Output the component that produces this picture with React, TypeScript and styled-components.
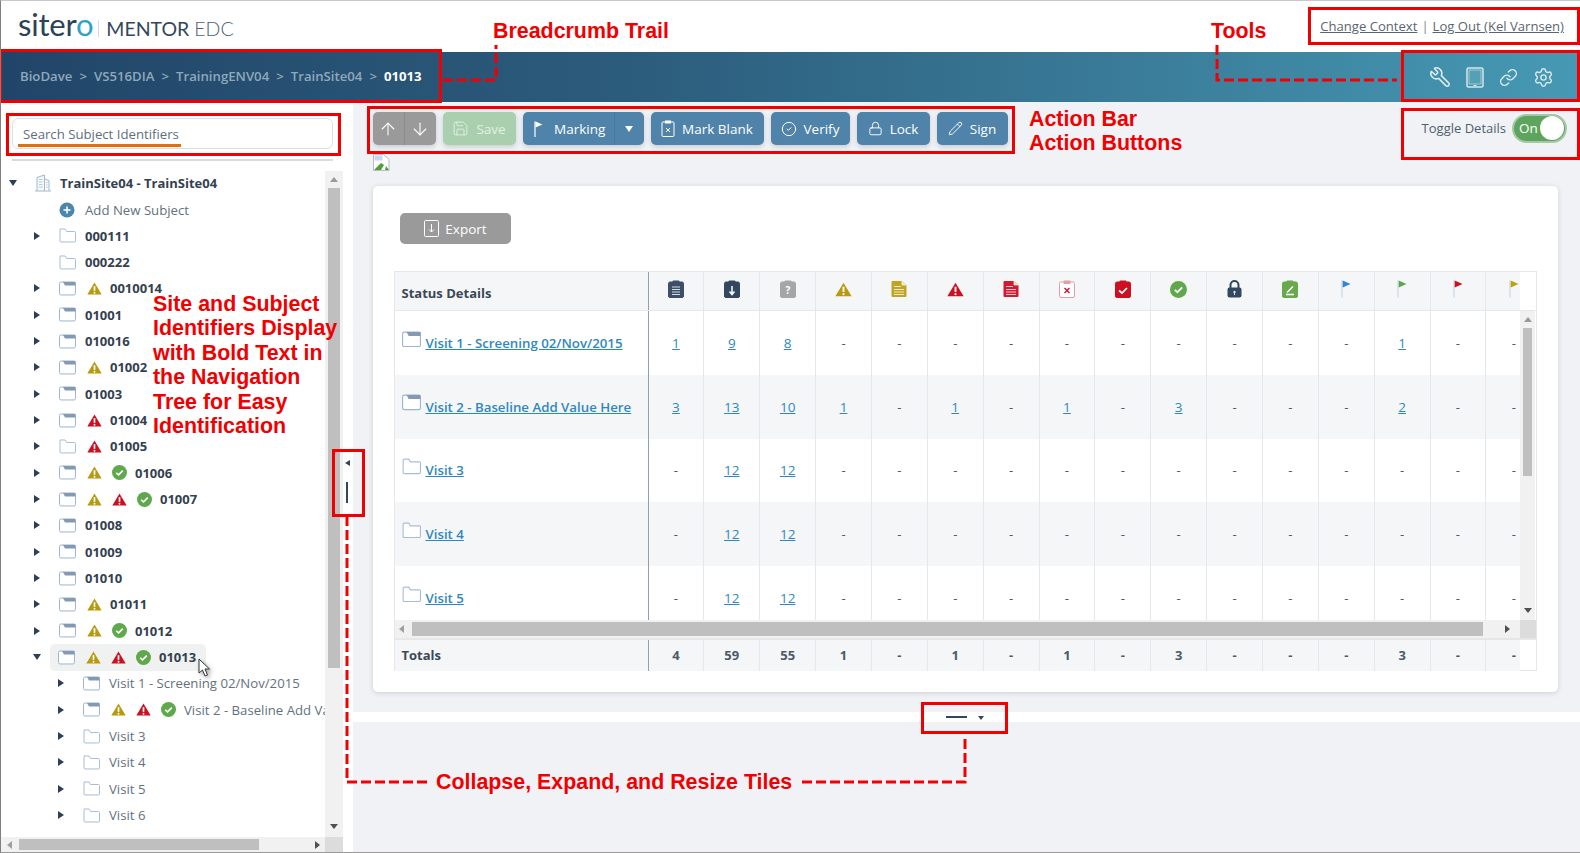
import React from "react";
import styled, { createGlobalStyle } from "styled-components";
import { ArrowDown, ArrowUp, CircleCheck, Link, Lock, Pencil, Save, Settings, Wrench } from "lucide-react";

const GlobalStyle = createGlobalStyle`
  html, body { margin: 0; padding: 0; background: #fff; }
  body { font-family: "Open Sans", "Liberation Sans", sans-serif; }
  * { box-sizing: border-box; }
`;

const Page = styled.div`
  position: relative;
  width: 1580px;
  height: 853px;
  overflow: hidden;
  display: flex;
  flex-direction: column;
  background: #fff;
  border-left: 1px solid #808080;
  border-top: 1px solid #c8c8c8;
  border-bottom: 1px solid #9a9a9a;
`;

const Header = styled.header`
  height: 51px;
  display: flex;
  align-items: center;
  justify-content: space-between;
  padding: 0 16px 0 17px;
`;

const Logo = styled.div`
  display: flex;
  align-items: baseline;
  color: #33475b;
  margin-top: -5px;
`;

const LogoMark = styled.span`
  font-family: "Lato", sans-serif;
  font-size: 31px;
  font-weight: 400;
  letter-spacing: -0.2px;
  color: #2c4256;
  b { font-weight: 400; color: #2ca3c6; }
`;

const LogoName = styled.span`
  font-family: "Lato", sans-serif;
  font-size: 19.5px;
  font-weight: 400;
  margin-left: 5px;
  padding-left: 7px;
  border-left: 1px solid #d5dadf;
  line-height: 17px;
  i { font-style: normal; font-weight: 300; margin-left: 5px; color: #51606e; }
`;

const TopLinks = styled.nav`
  display: flex;
  gap: 4px;
  font-size: 13.1px;
  color: #7c8792;
  margin-top: -1px;
  a { color: #5a6570; text-decoration: underline; }
`;

const Banner = styled.div`
  height: 50px;
  flex: none;
  display: flex;
  align-items: center;
  justify-content: space-between;
  padding: 0 26px 0 19px;
  background: linear-gradient(90deg, #214568 0%, #2c5c7c 40%, #4699b4 100%);
`;

const Crumbs = styled.div`
  display: flex;
  gap: 7px;
  font-size: 13.2px;
  font-weight: 600;
  color: #90a8bb;
  margin-top: -2px;
  b { color: #fff; font-weight: 700; }
`;

const ToolIcons = styled.div`
  display: flex;
  align-items: center;
  gap: 15px;
  color: #dbeaef;
`;

const Body = styled.div`
  flex: 1;
  display: flex;
  min-height: 0;
`;

const Sidebar = styled.aside`
  width: 352px;
  flex: none;
  display: flex;
  flex-direction: column;
  background: #fff;
`;

const SearchBox = styled.div`
  margin: 16px 0 0 11px;
  width: 321px;
  height: 31px;
  position: relative;
  flex: none;
  border: 1px solid #dcdfe3;
  border-radius: 6px;
  padding-left: 10px;
  display: flex;
  align-items: center;
  font-size: 13.2px;
  color: #5f6e7c;
  &::after {
    content: "";
    position: absolute;
    left: 5px;
    top: 25px;
    width: 163px;
    height: 3px;
    background: #e36f0c;
  }
`;

const Divider = styled.div`
  margin: 10px 0 0 11px;
  width: 321px;
  height: 2px;
  flex: none;
  background: #dadada;
`;

const TreeArea = styled.div`
  flex: 1;
  min-height: 0;
  display: flex;
  margin-top: 10px;
  width: 342px;
`;

const TreeList = styled.div`
  width: 324px;
  flex: none;
  overflow: hidden;
  margin-top: -1px;
`;

const TreeRow = styled.div<{ $level: number }>`
  height: 26.33px;
  display: flex;
  align-items: center;
  padding-left: ${(p) => 6 + p.$level * 24}px;
  white-space: nowrap;
`;

const Twist = styled.span<{ $state: "open" | "closed" | "none" }>`
  width: 20px;
  flex: none;
  display: block;
  height: 0;
  ${(p) =>
    p.$state === "closed" &&
    `border-left: 6px solid #2e4057; border-top: 4.5px solid transparent; border-bottom: 4.5px solid transparent; margin-left: 3px; margin-right: 11px; width: 0;`}
  ${(p) =>
    p.$state === "open" &&
    `border-top: 6px solid #2e4057; border-left: 4.5px solid transparent; border-right: 4.5px solid transparent; margin-left: 2px; margin-right: 9px; width: 0;`}
`;

const RowBody = styled.div<{ $active?: boolean }>`
  display: flex;
  align-items: center;
  height: 27px;
  padding: 0 10px 0 8px;
  border-radius: 5px;
  background: ${(p) => (p.$active ? "#f0f1f1" : "transparent")};
`;

const IconSlot = styled.span`
  width: 26px;
  flex: none;
  display: flex;
  align-items: center;
`;

const StatusSlot = styled.span`
  width: 25px;
  flex: none;
  display: flex;
  align-items: center;
  padding-left: 2px;
`;

const Label = styled.span<{ $strong?: boolean }>`
  font-size: ${(p) => (p.$strong ? 13 : 13.2)}px;
  font-weight: ${(p) => (p.$strong ? 700 : 400)};
  color: ${(p) => (p.$strong ? "#33414f" : "#63717e")};
`;

const VTrack = styled.div<{ $width: number }>`
  width: ${(p) => p.$width}px;
  flex: none;
  position: relative;
  background: #f1f1f1;
`;

const VThumb = styled.div<{ $top: number; $height: number }>`
  position: absolute;
  left: 3px;
  right: 3px;
  top: ${(p) => p.$top}px;
  height: ${(p) => p.$height}px;
  background: #bfbfbf;
`;

const ArrowUpMark = styled.span<{ $top: number }>`
  position: absolute;
  left: 50%;
  margin-left: -4px;
  top: ${(p) => p.$top}px;
  border-bottom: 5px solid #9a9a9a;
  border-left: 4px solid transparent;
  border-right: 4px solid transparent;
`;

const ArrowDownMark = styled.span<{ $bottom: number }>`
  position: absolute;
  left: 50%;
  margin-left: -4px;
  bottom: ${(p) => p.$bottom}px;
  border-top: 5px solid #505050;
  border-left: 4px solid transparent;
  border-right: 4px solid transparent;
`;

const HTrack = styled.div<{ $height: number; $width?: number }>`
  height: ${(p) => p.$height}px;
  ${(p) => (p.$width ? `width: ${p.$width}px;` : "")}
  flex: none;
  display: flex;
  align-items: stretch;
`;

const HRail = styled.div`
  flex: 1;
  position: relative;
  background: #f1f1f1;
`;

const HThumb = styled.div<{ $left: number; $width: number }>`
  position: absolute;
  top: 2px;
  bottom: 2px;
  left: ${(p) => p.$left}px;
  width: ${(p) => p.$width}px;
  background: #bfbfbf;
`;

const LeftMark = styled.span<{ $left: number }>`
  position: absolute;
  top: 50%;
  margin-top: -4px;
  left: ${(p) => p.$left}px;
  border-right: 5px solid #a0a0a0;
  border-top: 4px solid transparent;
  border-bottom: 4px solid transparent;
`;

const RightMark = styled.span<{ $right: number }>`
  position: absolute;
  top: 50%;
  margin-top: -4px;
  right: ${(p) => p.$right}px;
  border-left: 5px solid #505050;
  border-top: 4px solid transparent;
  border-bottom: 4px solid transparent;
`;

const ScrollCorner = styled.div<{ $width: number }>`
  width: ${(p) => p.$width}px;
  flex: none;
  background: #dcdcdc;
`;

/* resize handle sits in the strip between tree and main */
const Splitter = styled.div`
  position: absolute;
  left: 343px;
  top: 458px;
  width: 10px;
  height: 50px;
`;

const SplitArrow = styled.span`
  position: absolute;
  left: 1px;
  top: 1px;
  border-right: 5px solid #33475b;
  border-top: 3.5px solid transparent;
  border-bottom: 3.5px solid transparent;
`;

const SplitBar = styled.span`
  position: absolute;
  left: 2px;
  top: 23px;
  width: 2px;
  height: 21px;
  background: #33475b;
`;

const Main = styled.main`
  flex: 1;
  min-width: 0;
  display: flex;
  flex-direction: column;
  background: #f0f2f6;
`;

const ToolbarRow = styled.div`
  display: flex;
  align-items: center;
  justify-content: space-between;
  padding: 10px 13px 0 19.5px;
  height: 43px;
  flex: none;
`;

const Actions = styled.div`
  display: flex;
  gap: 7px;
`;

const ActionButton = styled.button<{ $width: number; $tone?: "blue" | "green" | "gray" }>`
  width: ${(p) => p.$width}px;
  height: 33px;
  padding: 0;
  border: 0;
  border-radius: 5px;
  display: flex;
  align-items: center;
  justify-content: center;
  gap: 7px;
  font-family: "Open Sans", sans-serif;
  font-size: 13.5px;
  color: ${(p) => (p.$tone === "green" ? "#e4f0e5" : "#fff")};
  background: ${(p) => (p.$tone === "green" ? "#a9cfae" : p.$tone === "gray" ? "#9a9a9a" : "#4f83aa")};
  box-shadow: 0 2px 5px rgba(60, 70, 90, 0.22);
`;

const SplitGroup = styled.div<{ $tone: "blue" | "gray" }>`
  display: flex;
  height: 33px;
  border-radius: 5px;
  overflow: hidden;
  color: #fff;
  font-size: 13.5px;
  background: ${(p) => (p.$tone === "gray" ? "#9a9a9a" : "#4f83aa")};
  box-shadow: 0 2px 5px rgba(60, 70, 90, 0.22);
`;

const SplitPart = styled.div<{ $width: number; $dark?: boolean; $gap?: number; $shift?: number }>`
  width: ${(p) => p.$width}px;
  display: flex;
  align-items: center;
  justify-content: center;
  gap: ${(p) => p.$gap ?? 10}px;
  padding-left: ${(p) => p.$shift ?? 0}px;
  border-left: ${(p) => (p.$dark ? "1px solid rgba(40, 60, 90, 0.14)" : "0")};
`;

const Caret = styled.span`
  border-top: 6px solid #fff;
  border-left: 4.5px solid transparent;
  border-right: 4.5px solid transparent;
`;

const ToggleWrap = styled.div`
  display: flex;
  align-items: center;
  gap: 6px;
  font-size: 13px;
  color: #4f5f6e;
  margin-top: -1px;
`;

const ToggleSwitch = styled.div`
  width: 55px;
  height: 29px;
  border-radius: 15px;
  background: #5da55e;
  border: 2px solid #a5c9a6;
  display: flex;
  align-items: center;
  justify-content: space-between;
  padding: 0 1px 0 5px;
  color: #fff;
  font-size: 13.5px;
  &::after {
    content: "";
    width: 24px;
    height: 24px;
    border-radius: 50%;
    background: #fff;
  }
`;

const BrokenSlot = styled.div`
  height: 41px;
  flex: none;
  padding: 9px 0 0 20px;
`;

const Card = styled.section`
  margin: 0 22px 0 19.5px;
  height: 506px;
  flex: none;
  background: #fff;
  border-radius: 5px;
  box-shadow: 0 1px 5px rgba(70, 80, 100, 0.22);
  padding: 27px 21px 0;
`;

const ExportButton = styled(ActionButton)`
  margin-left: 6.5px;
  height: 31px;
  gap: 6px;
  box-shadow: none;
`;

const Table = styled.div`
  margin-top: 27px;
  border: 1.5px solid #e5e7ea;
  width: 1143px;
  height: 400px;
  display: flex;
  flex-direction: column;
`;

const ClipRow = styled.div<{ $height: number; $tinted?: boolean }>`
  width: 1125.7px;
  height: ${(p) => p.$height}px;
  flex: none;
  display: flex;
  overflow: hidden;
  background: ${(p) => (p.$tinted ? "#f5f6f8" : "#fff")};
`;

const NameCell = styled.div<{ $strong?: boolean; $drop?: number }>`
  width: 254px;
  flex: none;
  display: flex;
  align-items: center;
  gap: 5px;
  padding: ${(p) => p.$drop ?? 0}px 0 0 7px;
  font-size: 13px;
  font-weight: ${(p) => (p.$strong ? 700 : 400)};
  color: #3a4857;
  border-right: 1.5px solid #8ea1b3;
`;

const Cell = styled.div<{ $strong?: boolean; $lift?: number }>`
  width: 55.87px;
  flex: none;
  display: flex;
  align-items: center;
  justify-content: center;
  padding-bottom: ${(p) => p.$lift ?? 0}px;
  font-size: 13px;
  font-weight: ${(p) => (p.$strong ? 700 : 400)};
  color: #4b5a69;
  border-right: 1.5px solid #e5e7ea;
`;

const DataLink = styled.a`
  color: #2e88c0;
  text-decoration: underline;
  font-size: 13.5px;
`;

const NameLink = styled(DataLink)`
  font-size: 13.25px;
  font-weight: 600;
  white-space: nowrap;
`;

const FolderWrap = styled.span`
  display: flex;
  margin-bottom: 8px;
`;

const HeadSep = styled.div`
  height: 1.5px;
  flex: none;
  background: #e5e7ea;
`;

const TableBody = styled.div`
  height: 309px;
  flex: none;
  display: flex;
`;

const RowsViewport = styled.div`
  width: 1125.7px;
  flex: none;
  overflow: hidden;
`;

const TotalsSep = styled.div`
  height: 1.5px;
  flex: none;
  background: #e5e7ea;
`;

const ResizeBand = styled.div`
  margin-top: 20px;
  height: 10px;
  flex: none;
  background: #fff;
  display: flex;
  align-items: center;
  justify-content: center;
  gap: 11px;
  padding-right: 4px;
`;

const Dash = styled.span`
  width: 21px;
  height: 2px;
  background: #33475b;
`;

const SmallCaret = styled.span`
  margin-top: 2px;
  border-top: 4px solid #33475b;
  border-left: 3px solid transparent;
  border-right: 3px solid transparent;
`;

/* red review markup on top of the screen */
const RedBox = styled.div<{ $x: number; $y: number; $w: number; $h: number }>`
  position: absolute;
  left: ${(p) => p.$x}px;
  top: ${(p) => p.$y}px;
  width: ${(p) => p.$w}px;
  height: ${(p) => p.$h}px;
  border: 3px solid #f00000;
`;

const Callout = styled.div<{ $x: number; $y: number }>`
  position: absolute;
  left: ${(p) => p.$x}px;
  top: ${(p) => p.$y}px;
  font-family: "Liberation Sans", Arial, sans-serif;
  font-size: 21.4px;
  line-height: 24.4px;
  font-weight: 700;
  color: #f00000;
  white-space: nowrap;
`;

const Leaders = styled.svg`
  position: absolute;
  left: -1px;
  top: -1px;
  pointer-events: none;
`;

const CursorMark = styled.svg`
  position: absolute;
  left: 196px;
  top: 657px;
  filter: drop-shadow(2px 2px 2px rgba(0, 0, 0, 0.35));
`;

const FolderIcon = ({ kind, size = 17 }: { kind: "empty" | "tab"; size?: number }) =>
  kind === "empty" ? (
    <svg width={size} height={size * 0.88} viewBox="0 0 17 15">
      <path d="M1.500 1h4.500l1.500 2.500h8a1 1 0 0 1 1 1V13a1 1 0 0 1-1 1h-13.500a1 1 0 0 1-1-1V2a1 1 0 0 1 1-1z" fill="#fff" stroke="#a9bdd6" />
    </svg>
  ) : (
    <svg width={size} height={size * 0.88} viewBox="0 0 17 15">
      <rect x="0.500" y="1" width="16" height="13" rx="1.500" fill="#fff" stroke="#9fb4ce" />
      <path d="M4 1h12.500v3.500H6z" fill="#8399b4" />
    </svg>
  );

const Building = () => (
  <svg width="18" height="18" viewBox="0 0 18 18">
    <path d="M1 17h16M3 17V3.500L10.500 1v16M10.500 5l4.500 1.500V17" fill="#f4f7fb" stroke="#a3b8d0" />
    <path d="M5 5.500h3.500M5 8h3.500M5 10.500h3.500M5 13h3.500M12 8.500h1.500M12 11h1.500M12 13.500h1.500" stroke="#b9c9db" />
  </svg>
);

const AddCircle = () => (
  <svg width="16" height="16" viewBox="0 0 16 16">
    <circle cx="8" cy="8" r="7.500" fill="#4b86ad" />
    <path d="M8 4.500v7M4.500 8h7" stroke="#fff" strokeWidth="1.600" />
  </svg>
);

const Warn = ({ color, size = 15 }: { color: string; size?: number }) => (
  <svg width={size} height={size * 0.87} viewBox="0 0 16 14">
    <path d="M8 .6 15.700 13.500H.3z" fill={color} />
    <path d="M8 4.500v5" stroke="#fff" strokeWidth="1.800" />
    <circle cx="8" cy="11.500" r="1" fill="#fff" />
  </svg>
);

const Done = ({ size = 15 }: { size?: number }) => (
  <svg width={size} height={size} viewBox="0 0 16 16">
    <circle cx="8" cy="8" r="8" fill="#5fa84c" />
    <path d="M4.500 8.300 7 10.500l4.500-4.500" fill="none" stroke="#fff" strokeWidth="1.700" />
  </svg>
);

const Clipboard = ({ fill, line, children }: { fill: string; line?: string; children?: React.ReactNode }) => (
  <svg width="16" height="18" viewBox="0 0 16 18">
    <rect x="0.500" y="2" width="15" height="15.500" rx="1.500" fill={fill} stroke={line || fill} />
    <rect x="4.500" y="0.500" width="7" height="3.500" rx="1" fill={line || fill} />
    {children}
  </svg>
);

const DocIcon = ({ fill }: { fill: string }) => (
  <svg width="16" height="18" viewBox="0 0 16 18">
    <path d="M1.500 1h9.500l4.500 4v11a1 1 0 0 1-1 1h-13a1 1 0 0 1-1-1V2a1 1 0 0 1 1-1z" fill={fill} />
    <path d="M11 1v4h4.500" fill="#f7e9a6" stroke="#fff" strokeWidth="0.700" />
    <path d="M3 6.500h7M3 9.500h10M3 12h10M3 14.500h10" stroke="#fff" strokeOpacity="0.75" />
  </svg>
);

const FlagIcon = ({ color }: { color: string }) => (
  <svg width="10" height="18" viewBox="0 0 10 18">
    <path d="M1 .5v17" stroke="#c9dbe6" strokeWidth="1.300" />
    <path d="M1.700.5 9.500 4l-7.800 3.500z" fill={color} />
  </svg>
);

const LockGlyph = () => (
  <svg width="15" height="18" viewBox="0 0 15 18">
    <path d="M3.500 8V5a4 4 0 0 1 8 0v3" fill="none" stroke="#33475f" strokeWidth="2" />
    <rect x="0.500" y="7.500" width="14" height="10" rx="2" fill="#33475f" />
    <circle cx="7.500" cy="12" r="1.200" fill="#d8dfe6" />
    <path d="M7.500 12v3" stroke="#d8dfe6" />
  </svg>
);

const HEAD_ICONS: React.ReactNode[] = [
  <Clipboard key="a" fill="#3c4e68"><path d="M4 7h8M4 9.500h8M4 12h8M4 14.500h8" stroke="#d6dbe2" strokeWidth="1.200" /></Clipboard>,
  <Clipboard key="b" fill="#33475f"><path d="M8 6v8M5.500 11.500 8 14.500l2.500-3" fill="none" stroke="#fff" strokeWidth="1.500" /></Clipboard>,
  <Clipboard key="c" fill="#a6a6a6"><text x="8" y="14" textAnchor="middle" fontSize="10" fontWeight="700" fill="#fff" fontFamily="Open Sans">?</text></Clipboard>,
  <Warn key="d" color="#b89a10" size={17} />,
  <DocIcon key="e" fill="#c0a424" />,
  <Warn key="f" color="#cc1022" size={17} />,
  <DocIcon key="g" fill="#d01a33" />,
  <Clipboard key="h" fill="#fff" line="#e0a0a6"><path d="M5.500 8l5 5M10.500 8l-5 5" stroke="#cc1022" strokeWidth="1.300" /></Clipboard>,
  <Clipboard key="i" fill="#cc1022"><path d="M4 10.500 7 13l5-5" fill="none" stroke="#fff" strokeWidth="1.700" /></Clipboard>,
  <Done key="j" size={17} />,
  <LockGlyph key="k" />,
  <Clipboard key="l" fill="#69a84f"><path d="M4 14.500h8M5 12.500 11 6.500" stroke="#fff" strokeWidth="1.500" /></Clipboard>,
  <FlagIcon key="m" color="#2f87d9" />,
  <FlagIcon key="n" color="#5da84e" />,
  <FlagIcon key="o" color="#cc1022" />,
  <FlagIcon key="p" color="#bfa010" />,
];

type Status = "warn" | "alert" | "ok";

type TreeItem = {
  level: number;
  twist: "open" | "closed" | "none";
  folder: "empty" | "tab";
  status: Status[];
  label: string;
  strong?: boolean;
  active?: boolean;
};

const subject = (label: string, folder: "empty" | "tab", status: Status[] = [], twist: "closed" | "none" | "open" = "closed", active = false): TreeItem => ({
  level: 1,
  twist,
  folder,
  status,
  label,
  strong: true,
  active,
});

const visit = (label: string, folder: "empty" | "tab", status: Status[] = []): TreeItem => ({
  level: 2,
  twist: "closed",
  folder,
  status,
  label,
});

const TREE: TreeItem[] = [
  subject("000111", "empty"),
  subject("000222", "empty", [], "none"),
  subject("0010014", "tab", ["warn"]),
  subject("01001", "tab"),
  subject("010016", "tab"),
  subject("01002", "tab", ["warn"]),
  subject("01003", "tab"),
  subject("01004", "tab", ["alert"]),
  subject("01005", "empty", ["alert"]),
  subject("01006", "tab", ["warn", "ok"]),
  subject("01007", "tab", ["warn", "alert", "ok"]),
  subject("01008", "tab"),
  subject("01009", "tab"),
  subject("01010", "tab"),
  subject("01011", "tab", ["warn"]),
  subject("01012", "tab", ["warn", "ok"]),
  subject("01013", "tab", ["warn", "alert", "ok"], "open", true),
  visit("Visit 1 - Screening 02/Nov/2015", "tab"),
  visit("Visit 2 - Baseline Add Value Here", "tab", ["warn", "alert", "ok"]),
  visit("Visit 3", "empty"),
  visit("Visit 4", "empty"),
  visit("Visit 5", "empty"),
  visit("Visit 6", "empty"),
];

const dashes = (over: Record<number, string>) => Array.from({ length: 16 }, (_, i) => over[i] || "-");

const VISITS = [
  { name: "Visit 1 - Screening 02/Nov/2015", folder: "tab" as const, values: dashes({ 0: "1", 1: "9", 2: "8", 13: "1" }) },
  { name: "Visit 2 - Baseline Add Value Here", folder: "tab" as const, values: dashes({ 0: "3", 1: "13", 2: "10", 3: "1", 5: "1", 7: "1", 9: "3", 13: "2" }) },
  { name: "Visit 3", folder: "empty" as const, values: dashes({ 1: "12", 2: "12" }) },
  { name: "Visit 4", folder: "empty" as const, values: dashes({ 1: "12", 2: "12" }) },
  { name: "Visit 5", folder: "empty" as const, values: dashes({ 1: "12", 2: "12" }) },
];

const TOTALS = dashes({ 0: "4", 1: "59", 2: "55", 3: "1", 5: "1", 7: "1", 9: "3", 13: "3" });

const StatusIcon = ({ kind }: { kind: Status }) =>
  kind === "ok" ? <Done /> : <Warn color={kind === "warn" ? "#b89a10" : "#cc1022"} />;

const TabletGlyph = () => (
  <svg width="18" height="21" viewBox="0 0 18 21">
    <rect x="1" y="1" width="16" height="19" rx="1.500" fill="none" stroke="#d5e8ea" strokeWidth="1.500" />
    <rect x="3" y="3" width="12" height="14" fill="#56a0b6" stroke="#b6dcd8" strokeWidth="0.800" />
    <path d="M7.500 18.500h3" stroke="#dbeaef" />
  </svg>
);

const FlagGlyph = () => (
  <svg width="9" height="16" viewBox="0 0 9 16">
    <path d="M1 .5V16" stroke="#fff" strokeWidth="1.200" />
    <path d="M1.500.5 8.500 3.500l-7 3z" fill="#fff" />
  </svg>
);

const ClipXGlyph = () => (
  <svg width="14" height="17" viewBox="0 0 14 17">
    <rect x="1" y="2" width="12" height="14.500" rx="1" fill="none" stroke="#fff" />
    <rect x="4" y="0.500" width="6" height="3" fill="#fff" />
    <path d="M5 8l4 4M9 8l-4 4" stroke="#fff" />
  </svg>
);

const ExportGlyph = () => (
  <svg width="15" height="17" viewBox="0 0 15 17">
    <rect x="0.500" y="0.500" width="14" height="16" rx="1" fill="none" stroke="#fff" />
    <path d="M7.500 4v8M5 9.500 7.500 12 10 9.500" fill="none" stroke="#fff" />
  </svg>
);

const BrokenImage = () => (
  <svg width="17" height="17" viewBox="0 0 17 17">
    <path d="M.5.500h10l5.500 5v11H.5z" fill="#fff" stroke="#b8bcc2" />
    <path d="M1.500 1.500h8v5h-8z" fill="#c4d8f0" />
    <path d="M1 16 8 9l3 2-3 5z" fill="#4e9e3a" />
    <path d="M13 12l3 4h-4z" fill="#4e9e3a" />
  </svg>
);

export default function App() {
  return (
    <Page>
      <GlobalStyle />
      <Header>
        <Logo>
          <LogoMark>
            siter<b>o</b>
          </LogoMark>
          <LogoName>
            MENTOR<i>EDC</i>
          </LogoName>
        </Logo>
        <TopLinks>
          <a>Change Context</a>|<a>Log Out (Kel Varnsen)</a>
        </TopLinks>
      </Header>
      <Banner>
        <Crumbs>
          <span>BioDave</span>
          <span>&gt;</span>
          <span>VS516DIA</span>
          <span>&gt;</span>
          <span>TrainingENV04</span>
          <span>&gt;</span>
          <span>TrainSite04</span>
          <span>&gt;</span>
          <b>01013</b>
        </Crumbs>
        <ToolIcons>
          <Wrench size={22} strokeWidth={1.7} style={{ transform: "scaleX(-1)" }} />
          <TabletGlyph />
          <Link size={19} strokeWidth={1.8} />
          <Settings size={21} strokeWidth={1.6} />
        </ToolIcons>
      </Banner>
      <Body>
        <Sidebar>
          <SearchBox>Search Subject Identifiers</SearchBox>
          <Divider />
          <TreeArea>
            <TreeList>
              <TreeRow $level={0}>
                <Twist $state="open" />
                <RowBody>
                  <IconSlot>
                    <Building />
                  </IconSlot>
                  <Label $strong>TrainSite04 - TrainSite04</Label>
                </RowBody>
              </TreeRow>
              <TreeRow $level={1}>
                <Twist $state="none" />
                <RowBody>
                  <IconSlot>
                    <AddCircle />
                  </IconSlot>
                  <Label>Add New Subject</Label>
                </RowBody>
              </TreeRow>
              {TREE.map((item) => (
                <TreeRow key={item.label} $level={item.level}>
                  <Twist $state={item.twist} />
                  <RowBody $active={item.active}>
                    <IconSlot>
                      <FolderIcon kind={item.folder} />
                    </IconSlot>
                    {item.status.map((s) => (
                      <StatusSlot key={s}>
                        <StatusIcon kind={s} />
                      </StatusSlot>
                    ))}
                    <Label $strong={item.strong}>{item.label}</Label>
                  </RowBody>
                </TreeRow>
              ))}
            </TreeList>
            <VTrack $width={18}>
              <ArrowUpMark $top={6} />
              <VThumb $top={17} $height={480} />
              <ArrowDownMark $bottom={8} />
            </VTrack>
          </TreeArea>
          <HTrack $height={15} $width={342}>
            <HRail>
              <LeftMark $left={6} />
              <HThumb $left={18} $width={240} />
              <RightMark $right={5} />
            </HRail>
            <ScrollCorner $width={18} />
          </HTrack>
          <Splitter>
            <SplitArrow />
            <SplitBar />
          </Splitter>
        </Sidebar>
        <Main>
          <ToolbarRow>
            <Actions>
              <SplitGroup $tone="gray">
                <SplitPart $width={31}>
                  <ArrowUp size={20} strokeWidth={1.3} />
                </SplitPart>
                <SplitPart $width={32} $dark>
                  <ArrowDown size={20} strokeWidth={1.3} />
                </SplitPart>
              </SplitGroup>
              <ActionButton $width={73} $tone="green">
                <Save size={17} strokeWidth={1.3} />
                Save
              </ActionButton>
              <SplitGroup $tone="blue">
                <SplitPart $width={91.500} $gap={11} $shift={3}>
                  <FlagGlyph />
                  Marking
                </SplitPart>
                <SplitPart $width={29.500} $dark>
                  <Caret />
                </SplitPart>
              </SplitGroup>
              <ActionButton $width={113}>
                <ClipXGlyph />
                Mark Blank
              </ActionButton>
              <ActionButton $width={79}>
                <CircleCheck size={16} strokeWidth={1.5} />
                Verify
              </ActionButton>
              <ActionButton $width={73}>
                <Lock size={15} strokeWidth={1.5} />
                Lock
              </ActionButton>
              <ActionButton $width={71}>
                <Pencil size={15} strokeWidth={1.5} />
                Sign
              </ActionButton>
            </Actions>
            <ToggleWrap>
              Toggle Details
              <ToggleSwitch>On</ToggleSwitch>
            </ToggleWrap>
          </ToolbarRow>
          <BrokenSlot>
            <BrokenImage />
          </BrokenSlot>
          <Card>
            <ExportButton as="div" $width={111} $tone="gray">
              <ExportGlyph />
              Export
            </ExportButton>
            <Table>
              <ClipRow $height={37.500} $tinted>
                <NameCell $strong $drop={4}>Status Details</NameCell>
                {HEAD_ICONS.map((icon, i) => (
                  <Cell key={i} $lift={3}>{icon}</Cell>
                ))}
              </ClipRow>
              <HeadSep />
              <TableBody>
                <RowsViewport>
                  {VISITS.map((row, r) => (
                    <ClipRow key={row.name} $height={63.750} $tinted={r % 2 === 1}>
                      <NameCell>
                        <FolderWrap>
                          <FolderIcon kind={row.folder} size={19} />
                        </FolderWrap>
                        <NameLink>{row.name}</NameLink>
                      </NameCell>
                      {row.values.map((v, i) => (
                        <Cell key={i}>{v === "-" ? "-" : <DataLink>{v}</DataLink>}</Cell>
                      ))}
                    </ClipRow>
                  ))}
                </RowsViewport>
                <VTrack $width={15}>
                  <ArrowUpMark $top={6} />
                  <VThumb $top={17} $height={148} />
                  <ArrowDownMark $bottom={7} />
                </VTrack>
              </TableBody>
              <HTrack $height={18}>
                <HRail>
                  <LeftMark $left={4} />
                  <HThumb $left={17} $width={1071} />
                  <RightMark $right={10} />
                </HRail>
                <ScrollCorner $width={16} />
              </HTrack>
              <TotalsSep />
              <ClipRow $height={31} $tinted>
                <NameCell $strong>Totals</NameCell>
                {TOTALS.map((v, i) => (
                  <Cell key={i} $strong>
                    {v}
                  </Cell>
                ))}
              </ClipRow>
            </Table>
          </Card>
          <ResizeBand>
            <Dash />
            <SmallCaret />
          </ResizeBand>
        </Main>
      </Body>

      <CursorMark width="16" height="20" viewBox="0 0 16 20">
        <path d="M2 1v14l3.500-3 2.500 6 2.500-1-2.500-6h4.500z" fill="#fff" stroke="#333" strokeWidth="1" />
      </CursorMark>

      <Leaders width="1580" height="853">
        <g fill="none" stroke="#f00000" strokeWidth="3" strokeDasharray="10 4">
          <path d="M443 80H496V45" />
          <path d="M1217 45V80H1397" />
          <path d="M347 516V782H430" />
          <path d="M802 782H965V735" />
        </g>
      </Leaders>
      <RedBox $x={-2} $y={48} $w={443} $h={54} />
      <RedBox $x={5} $y={112} $w={335} $h={43} />
      <RedBox $x={331} $y={448} $w={33} $h={68} />
      <RedBox $x={366} $y={105} $w={648} $h={48} />
      <RedBox $x={1400} $y={49} $w={179} $h={52} />
      <RedBox $x={1400} $y={107} $w={179} $h={52} />
      <RedBox $x={1307} $y={6} $w={272} $h={38} />
      <RedBox $x={920} $y={701} $w={87} $h={32} />
      <Callout $x={492} $y={18}>Breadcrumb Trail</Callout>
      <Callout $x={1210} $y={18}>Tools</Callout>
      <Callout $x={1028} $y={106}>
        Action Bar
        <br />
        Action Buttons
      </Callout>
      <Callout $x={152} $y={291}>
        Site and Subject
        <br />
        Identifiers Display
        <br />
        with Bold Text in
        <br />
        the Navigation
        <br />
        Tree for Easy
        <br />
        Identification
      </Callout>
      <Callout $x={435} $y={769}>Collapse, Expand, and Resize Tiles</Callout>
    </Page>
  );
}
